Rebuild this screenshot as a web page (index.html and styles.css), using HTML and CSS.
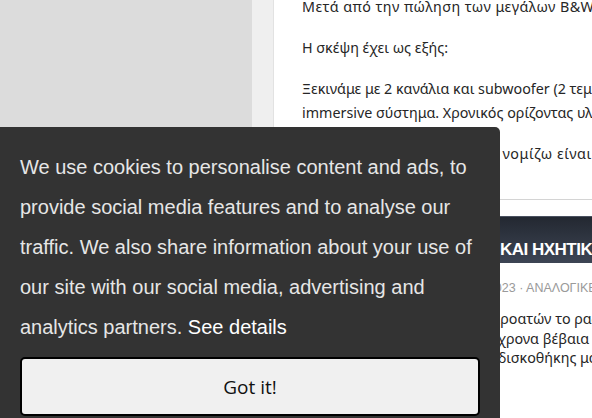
FILE: index.html
```html
<!DOCTYPE html>
<html lang="el">
<head>
<meta charset="utf-8">
<title>Forum</title>
<link rel="stylesheet" href="styles.css">
</head>
<body>
<div class="page">
  <aside class="side"></aside>
  <div class="rail"></div>
  <main class="main">
    <article class="post">
      <p class="lead">Μετά από την πώληση των μεγάλων B&amp;W 802 D3, αποφάσισα να στήσω ένα νέο σύστημα.</p>
      <p>Η σκέψη έχει ως εξής:</p>
      <p>Ξεκινάμε με 2 κανάλια και subwoofer (2 τεμάχια) και σταδιακά πάμε σε ένα πλήρες<br>immersive σύστημα. Χρονικός ορίζοντας υλοποίησης περίπου ένας χρόνος.</p>
      <p class="tail">Το κόστος είναι εύλογο, και νομίζω είναι</p>
    </article>
    <section class="feed">
      <h2 class="banner">ΑΝΑΠΑΡΑΓΩΓΗ ΜΟΥΣΙΚΗΣ ΚΑΙ ΗΧΗΤΙΚΑ ΣΥΣΤΗΜΑΤΑ</h2>
      <div class="meta">ΚΩΣΤΑΣ ΚΑΡΑΛΗΣ · 12 ΑΠΡΙΛΙΟΥ 2023 · ΑΝΑΛΟΓΙΚΕΣ ΠΗΓΕΣ</div>
      <div class="excerpt">
        <div class="line">Η μεγάλη πλειονότητα των ακροατών το ραδιόφωνο το θεωρεί</div>
        <div class="line">ήχο του παρελθόντος. Τα σύγχρονα βέβαια συστήματα</div>
        <div class="line">χωράνε άνετα τα βινύλια της δισκοθήκης μας.</div>
      </div>
    </section>
  </main>
</div>

<div class="cookie">
  <p class="cookie-text">We use cookies to personalise content and ads, to provide social media features and to analyse our traffic. We also share information about your use of our site with our social media, advertising and analytics partners. <a class="cookie-link" href="#">See details</a></p>
  <button class="cookie-btn" type="button">Got it!</button>
</div>
</body>
</html>
```

FILE: styles.css
```css
html, body {
  margin: 0;
  padding: 0;
  overflow: hidden;
  background: #dcdcdc;
}

.page {
  display: flex;
  width: 1000px;
  min-height: 418px;
}

.side {
  flex: 0 0 252px;
  background: #dcdcdc;
}

.rail {
  flex: 0 0 21px;
  background: #efefef;
  border-right: 1px solid #e2e2e2;
}

.main {
  flex: 0 0 700px;
  background: #fff;
  font-family: "Noto Sans", "Open Sans", sans-serif;
  font-size: 14.3px;
  color: #262626;
}

.post {
  margin-top: -5px;
  padding: 0 0 16px 28px;
  border-bottom: 1px solid #d4d4d4;
}

.post p {
  margin: 0 0 17px;
  line-height: 24px;
  white-space: nowrap;
}

.post .lead {
  letter-spacing: 0.45px;
}

.post .tail {
  letter-spacing: 0.55px;
}

.feed {
  margin-top: 16px;
}

.banner {
  margin: 0;
  height: 47px;
  box-sizing: border-box;
  padding: 23px 0 0 9px;
  line-height: 20px;
  font-family: "Liberation Sans", Arial, sans-serif;
  font-weight: bold;
  font-size: 17px;
  letter-spacing: -0.5px;
  color: #fff;
  white-space: nowrap;
  background: linear-gradient(#232831, #3d4554);
  border-top: 1px solid #4a5160;
}

.meta {
  margin-top: 17px;
  padding-left: 15px;
  line-height: 16px;
  font-family: "Liberation Sans", Arial, sans-serif;
  font-size: 12.5px;
  color: #9a9a9a;
  white-space: nowrap;
}

.excerpt {
  margin-top: 13px;
  padding-left: 28px;
  line-height: 19.5px;
}

.line {
  white-space: nowrap;
}

.cookie {
  position: fixed;
  left: 0;
  bottom: -18px;
  width: 500px;
  box-sizing: border-box;
  padding: 20px;
  background: #333;
  border-top-right-radius: 5px;
}

.cookie-text {
  margin: 0;
  font-family: "Liberation Sans", Arial, sans-serif;
  font-size: 20px;
  line-height: 40px;
  color: #e6e6e6;
}

.cookie-link {
  color: #fff;
  text-decoration: none;
}

.cookie-btn {
  display: block;
  width: 100%;
  height: 59px;
  margin-top: 10px;
  border: 2px solid #000;
  border-radius: 5px;
  background: #f0f0f0;
  color: #111;
  font-family: "Open Sans", "Noto Sans", sans-serif;
  font-size: 19px;
  cursor: pointer;
}
```
